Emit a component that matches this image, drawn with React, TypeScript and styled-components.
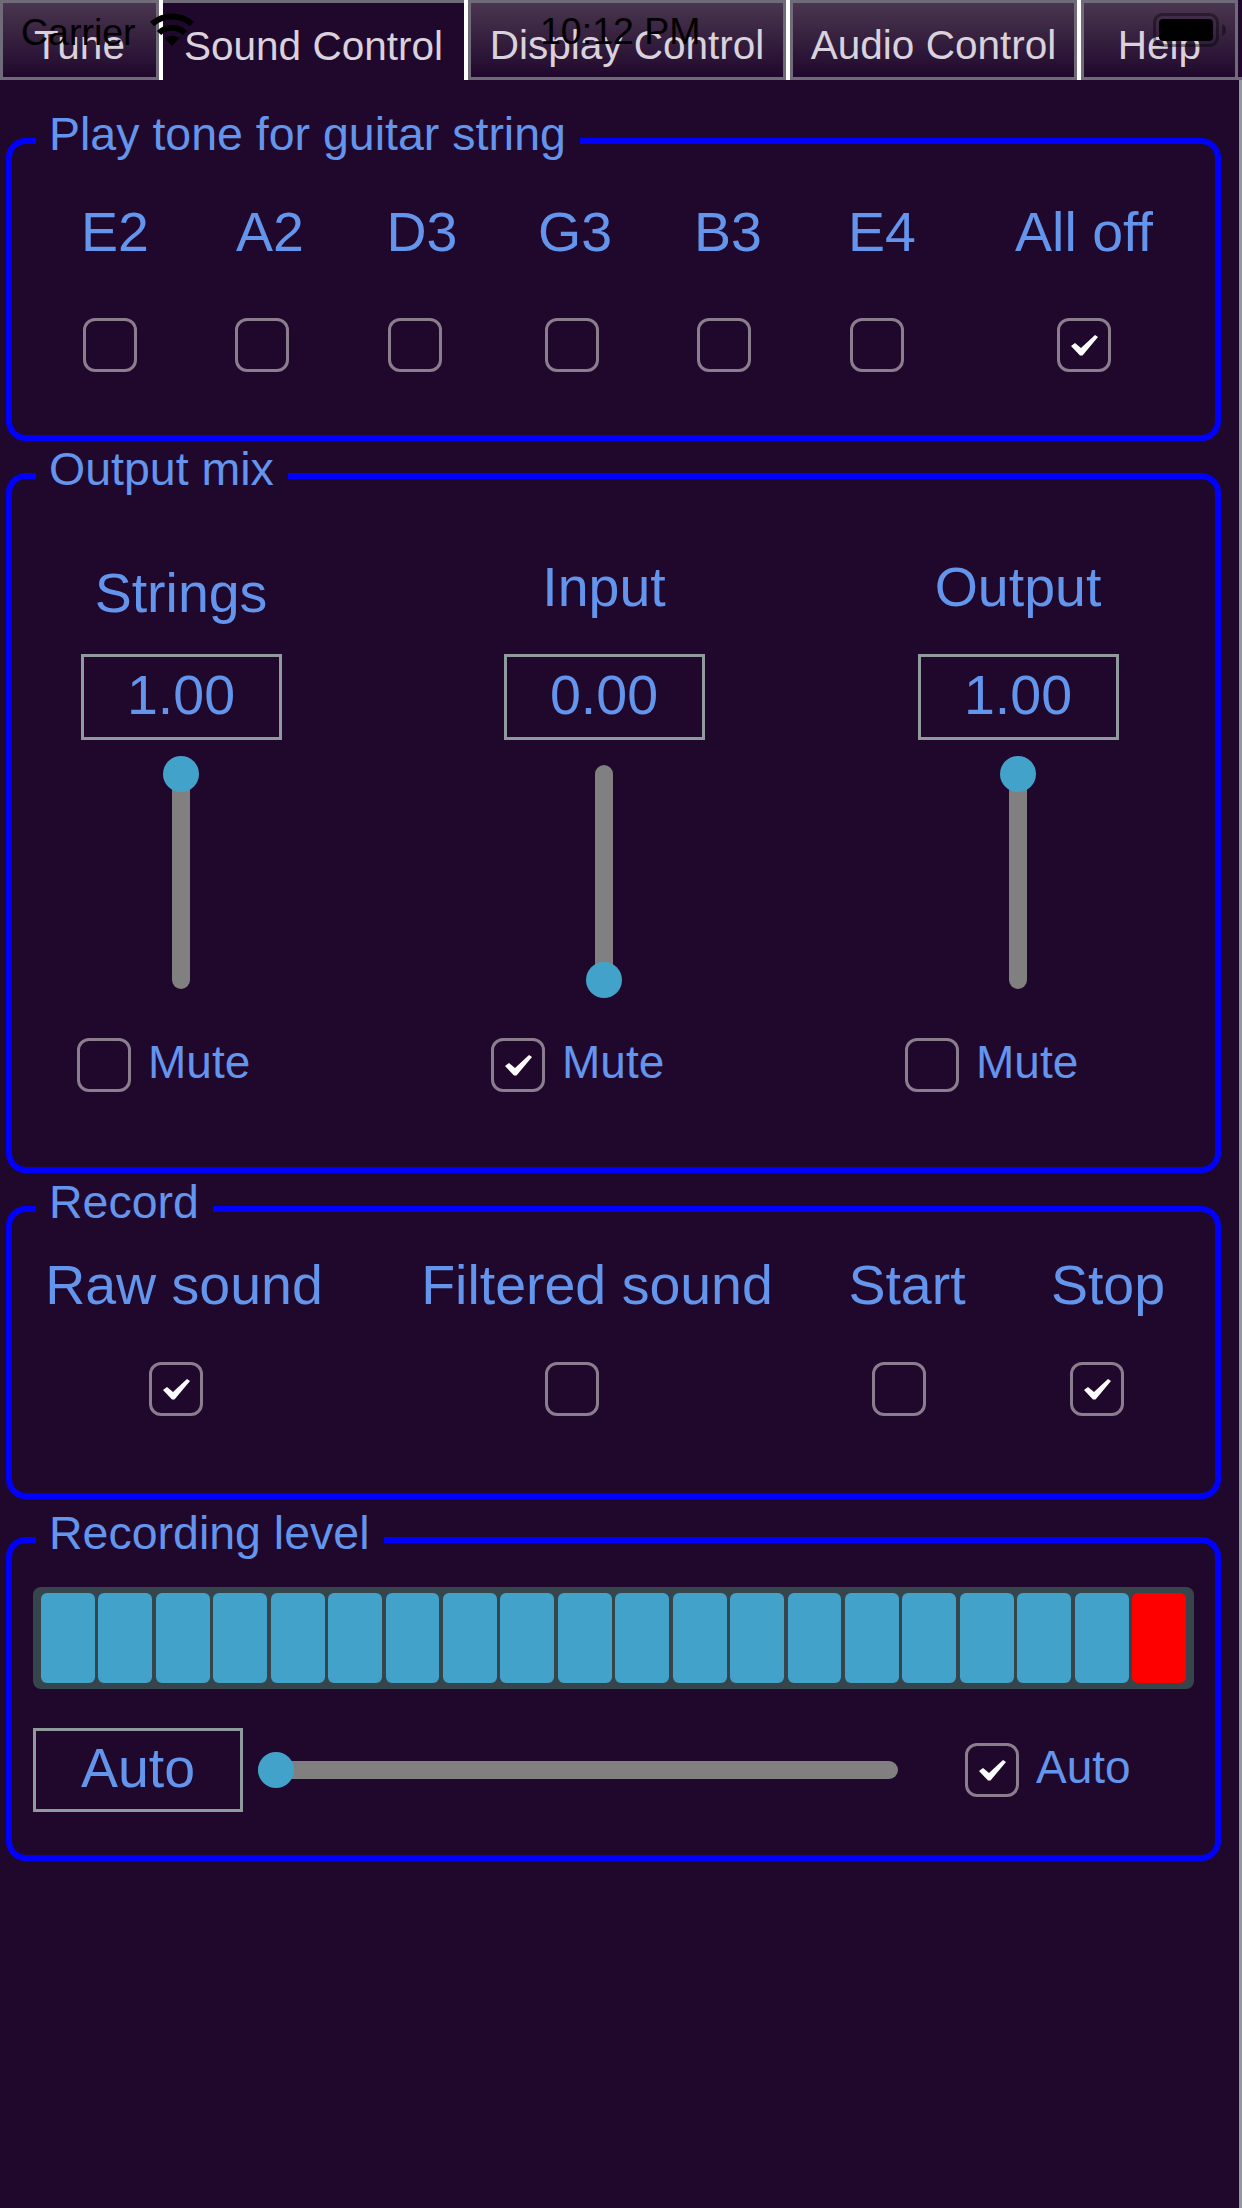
import React from "react";
import styled, { createGlobalStyle } from "styled-components";

const Global = createGlobalStyle`
  html, body { margin: 0; padding: 0; background: #20082c; }
  * { box-sizing: border-box; }
`;

const Page = styled.div`
  position: relative;
  width: 1242px;
  height: 2208px;
  overflow: hidden;
  background: #20082c;
  font-family: "Liberation Sans", Arial, sans-serif;
  color: #6495ed;
`;

const Status = styled.div`
  position: absolute;
  inset: 0 0 auto 0;
  height: 60px;
  color: #000;
  font-size: 37.5px;
  line-height: 60px;
`;
const Carrier = styled.span`
  position: absolute;
  left: 21px;
  top: 2px;
`;
const Clock = styled.span`
  position: absolute;
  left: 540px;
  top: 1px;
`;
const WifiIcon = styled.svg`
  position: absolute;
  left: 150px;
  top: 13px;
`;
const BatteryIcon = styled.svg`
  position: absolute;
  left: 1151px;
  top: 11px;
`;

const TabBar = styled.div`
  display: flex;
  height: 80px;
`;
const Tab = styled.div<{ $w: number; $active?: boolean }>`
  width: ${(p) => p.$w}px;
  flex: none;
  height: 80px;
  display: flex;
  align-items: center;
  justify-content: center;
  padding-top: 10px;
  font-size: 40.5px;
  color: #d9d2dd;
  border-top: 3px solid #6f6b78;
  border-bottom: ${(p) => (p.$active ? 0 : 3)}px solid #6f6b78;
  border-right: ${(p) => (p.$active ? 0 : 3)}px solid #6f6b78;
  border-left: ${(p) => (p.$active ? 0 : 3)}px solid #6f6b78;
  background: ${(p) =>
    p.$active ? "#20082c" : "linear-gradient(#4a3650, #20082c)"};
`;
const TabSlot = styled.div<{ $first?: boolean }>`
  flex: none;
  border-left: ${(p) => (p.$first ? 0 : 4)}px solid #fff;
`;
const TabFiller = styled.div`
  flex: 1;
  border-bottom: 3px solid #6f6b78;
`;

const Content = styled.div`
  display: flex;
  flex-direction: column;
  height: 2128px;
  padding: 28px 0 0 6px;
  gap: 2px;
  border-right: 3px solid #8f9a9c;
`;

const Panel = styled.fieldset<{ $h: number; $after?: number }>`
  flex: none;
  width: 1215px;
  height: ${(p) => p.$h}px;
  margin: 0 0 ${(p) => p.$after ?? 0}px;
  padding: 0;
  border: 6px solid #0000ff;
  border-radius: 20px;
  min-width: 0;
`;
const Legend = styled.legend`
  margin-left: 24px;
  padding: 0 14px 14px 13px;
  font-size: 46.5px;
  line-height: 52px;
`;

const AnchorRow = styled.div<{ $top: number }>`
  display: flex;
  margin-top: ${(p) => p.$top}px;
`;
const Anchor = styled.div<{ $dx: number }>`
  width: 0;
  margin-left: ${(p) => p.$dx}px;
  display: flex;
  justify-content: center;
  white-space: nowrap;
`;
const BigLabel = styled.div<{ $drop?: number }>`
  font-size: 55.5px;
  line-height: 60px;
  text-align: center;
  white-space: nowrap;
  margin-top: ${(p) => p.$drop ?? 0}px;
  margin-bottom: ${(p) => 37 - (p.$drop ?? 0)}px;
`;
const AnchorLabel = styled.div`
  font-size: 55.5px;
  line-height: 60px;
`;

const Box = styled.div`
  width: 54px;
  height: 54px;
  flex: none;
  border: 3px solid #8a7d8e;
  border-radius: 12px;
  display: flex;
  align-items: center;
  justify-content: center;
`;

const Check = () => (
  <svg width="27" height="21" viewBox="0 0 27 21">
    <path d="M0 11 L4 8 L10 13 L24 0 L27 2 L11.5 20.5 L9 20.5 Z" fill="#fff" />
  </svg>
);
const CheckBox = ({ on }: { on?: boolean }) => <Box>{on && <Check />}</Box>;

const MixColumns = styled.div`
  display: flex;
  padding-top: 48px;
`;
const MixColumn = styled.div<{ $dx: number }>`
  width: 300px;
  flex: none;
  margin-left: ${(p) => p.$dx}px;
  display: flex;
  flex-direction: column;
  align-items: center;
`;
const ValueBox = styled.div<{ $w: number; $h?: number }>`
  width: ${(p) => p.$w}px;
  height: ${(p) => p.$h ?? 86}px;
  flex: none;
  border: 3px solid #8f9a9c;
  font-size: 55.5px;
  padding-bottom: 4px;
  display: flex;
  align-items: center;
  justify-content: center;
`;
const VSlider = styled.div`
  position: relative;
  width: 36px;
  height: 242px;
  margin-top: 16px;
  display: flex;
  justify-content: center;
  padding: 9px 0;
`;
const VTrack = styled.div`
  width: 18px;
  background: #808080;
  border-radius: 9px;
`;
const Thumb = styled.div<{ $bottom?: boolean }>`
  position: absolute;
  left: 0;
  width: 36px;
  height: 36px;
  border-radius: 50%;
  background: #42a2c9;
  ${(p) => (p.$bottom ? "bottom: 0;" : "top: 0;")}
`;
const MuteRow = styled.div<{ $indent: number }>`
  align-self: flex-start;
  margin: 40px 0 0 ${(p) => p.$indent}px;
  display: flex;
  align-items: center;
  gap: 17px;
`;
const SmallLabel = styled.span`
  font-size: 46px;
  line-height: 50px;
  margin-top: -7px;
`;

const Meter = styled.div`
  margin: 14px 0 0 21px;
  width: 1161px;
  height: 102px;
  padding: 6px 8px;
  background: #36454c;
  border-radius: 8px;
  display: grid;
  grid-template-columns: repeat(20, 1fr);
  column-gap: 3.5px;
`;
const Segment = styled.div<{ $red?: boolean }>`
  border-radius: 6px;
  background: ${(p) => (p.$red ? "#ff0000" : "#42a2c9")};
`;
const LevelRow = styled.div`
  display: flex;
  align-items: center;
  margin: 39px 0 0 21px;
`;
const HSlider = styled.div`
  position: relative;
  width: 640px;
  height: 36px;
  margin-left: 15px;
  padding: 9px 0;
`;
const HTrack = styled.div`
  height: 18px;
  background: #808080;
  border-radius: 9px;
`;
const HThumb = styled.div`
  position: absolute;
  left: 0;
  top: 0;
  width: 36px;
  height: 36px;
  border-radius: 50%;
  background: #42a2c9;
`;
const AutoCheck = styled.div`
  display: flex;
  align-items: center;
  gap: 17px;
  margin-left: 67px;
`;

const tabs: [string, number, boolean?][] = [
  ["Tune", 159],
  ["Sound Control", 301, true],
  ["Display Control", 318],
  ["Audio Control", 287],
  ["Help", 157],
];

const App = () => (
  <Page>
    <Global />
    <TabBar>
      {tabs.map(([t, w, a], i) => (
        <TabSlot key={t} $first={i === 0}>
          <Tab $w={w} $active={a}>
            {t}
          </Tab>
        </TabSlot>
      ))}
      <TabFiller />
    </TabBar>
    <Content>
      <Panel $h={333}>
        <Legend>Play tone for guitar string</Legend>
        <AnchorRow $top={28}>
          {[
            ["E2", 103],
            ["A2", 155],
            ["D3", 152],
            ["G3", 153],
            ["B3", 153],
            ["E4", 154],
            ["All off", 202],
          ].map(([t, dx]) => (
            <Anchor key={t as string} $dx={dx as number}>
              <AnchorLabel>{t}</AnchorLabel>
            </Anchor>
          ))}
        </AnchorRow>
        <AnchorRow $top={56}>
          {[98, 152, 153, 157, 152, 153, 207].map((dx, i) => (
            <Anchor key={i} $dx={dx}>
              <CheckBox on={i === 6} />
            </Anchor>
          ))}
        </AnchorRow>
      </Panel>
      <Panel $h={730} $after={1}>
        <Legend>Output mix</Legend>
        <MixColumns>
          {[
            { t: "Strings", v: "1.00", dx: 19, drop: 6, bottom: false, on: false, indent: 46 },
            { t: "Input", v: "0.00", dx: 123, drop: 0, bottom: true, on: true, indent: 37 },
            { t: "Output", v: "1.00", dx: 114, drop: 0, bottom: false, on: false, indent: 37 },
          ].map((c) => (
            <MixColumn key={c.t} $dx={c.dx}>
              <BigLabel $drop={c.drop}>{c.t}</BigLabel>
              <ValueBox $w={201}>{c.v}</ValueBox>
              <VSlider>
                <VTrack />
                <Thumb $bottom={c.bottom} />
              </VSlider>
              <MuteRow $indent={c.indent}>
                <CheckBox on={c.on} />
                <SmallLabel>Mute</SmallLabel>
              </MuteRow>
            </MixColumn>
          ))}
        </MixColumns>
      </Panel>
      <Panel $h={323} $after={6}>
        <Legend>Record</Legend>
        <AnchorRow $top={13}>
          {[
            ["Raw sound", 172],
            ["Filtered sound", 413],
            ["Start", 310],
            ["Stop", 201],
          ].map(([t, dx]) => (
            <Anchor key={t as string} $dx={dx as number}>
              <AnchorLabel>{t}</AnchorLabel>
            </Anchor>
          ))}
        </AnchorRow>
        <AnchorRow $top={47}>
          {[164, 396, 327, 198].map((dx, i) => (
            <Anchor key={i} $dx={dx}>
              <CheckBox on={i === 0 || i === 3} />
            </Anchor>
          ))}
        </AnchorRow>
      </Panel>
      <Panel $h={354}>
        <Legend>Recording level</Legend>
        <Meter>
          {Array.from({ length: 20 }, (_, i) => (
            <Segment key={i} $red={i === 19} />
          ))}
        </Meter>
        <LevelRow>
          <ValueBox $w={210} $h={84}>Auto</ValueBox>
          <HSlider>
            <HTrack />
            <HThumb />
          </HSlider>
          <AutoCheck>
            <CheckBox on />
            <SmallLabel>Auto</SmallLabel>
          </AutoCheck>
        </LevelRow>
      </Panel>
    </Content>
    <Status>
      <Carrier>Carrier</Carrier>
      <WifiIcon width="44" height="33" viewBox="0 0 44 33">
        <path d="M2 11 C13 1 31 1 42 11" fill="none" stroke="#000" strokeWidth="6" />
        <path d="M9 20 C16 13 28 13 35 20" fill="none" stroke="#000" strokeWidth="6" />
        <path d="M22 33 L14.5 25 C19 22 25 22 29.5 25 Z" fill="#000" />
      </WifiIcon>
      <Clock>10:12 PM</Clock>
      <BatteryIcon width="76" height="37" viewBox="0 0 76 37">
        <rect x="3.5" y="3.5" width="63" height="31" rx="8" fill="none" stroke="#000" strokeOpacity="0.4" strokeWidth="3" />
        <rect x="8" y="8" width="54" height="22" rx="4" fill="#000" />
        <path d="M71 13 C74 14 75 16 75 19 C75 22 74 24 71 25 Z" fill="#000" fillOpacity="0.4" />
      </BatteryIcon>
    </Status>
  </Page>
);

export default App;
